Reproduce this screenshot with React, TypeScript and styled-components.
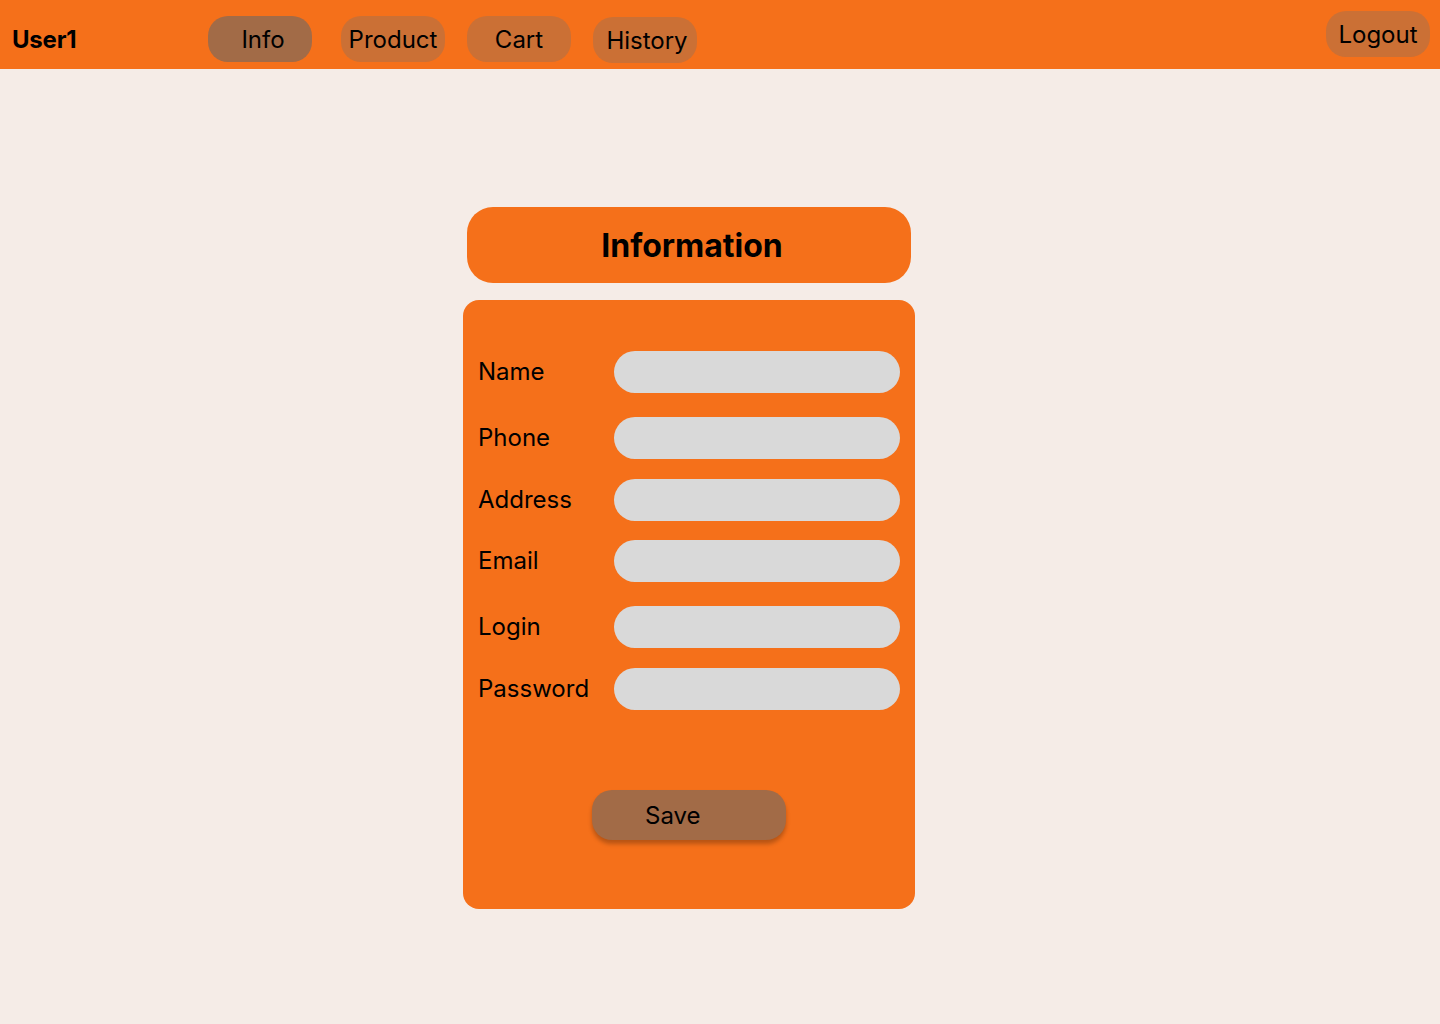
import React from "react";
import styled, { createGlobalStyle } from "styled-components";

const Global = createGlobalStyle`
  html, body { margin: 0; padding: 0; }
  body {
    background: #F5ECE7;
    font-family: Inter, "Noto Sans", "Liberation Sans", sans-serif;
    color: #000;
  }
`;

const Page = styled.div`
  min-height: 1024px;
  background: #F5ECE7;
`;

const Header = styled.header`
  height: 69px;
  background: #F5701A;
  display: flex;
  align-items: flex-start;
  box-sizing: border-box;
  padding: 0 10px 0 12px;
`;

const Brand = styled.div`
  width: 196px;
  height: 69px;
  line-height: 79px;
  font-weight: 700;
  font-size: 24px;
  letter-spacing: -0.2px;
`;

const Nav = styled.nav`
  display: flex;
  align-items: flex-start;
  gap: 22px;
  flex: 1;
`;

const Pill = styled.button<{ $active?: boolean; $top?: number; $after?: number; $shift?: number }>`
  width: 104px;
  height: 46px;
  margin-top: ${(p) => p.$top ?? 16}px;
  margin-right: ${(p) => p.$after ?? 0}px;
  border: none;
  border-radius: 20px;
  background: ${(p) => (p.$active ? "#A26B47" : "#CB7035")};
  font-family: Inter, "Noto Sans", sans-serif;
  font-size: 24px;
  color: #000;
  padding: 0 0 0 ${(p) => p.$shift ?? 0}px;
  display: flex;
  align-items: center;
  justify-content: center;
  cursor: pointer;
`;

const Main = styled.main`
  padding: 138px 0 0 463px;
  display: flex;
  flex-direction: column;
  align-items: flex-start;
`;

const TitleBox = styled.div`
  width: 444px;
  height: 76px;
  margin-left: 4px;
  border-radius: 26px;
  background: #F5701A;
  display: flex;
  align-items: center;
  justify-content: center;
  font-weight: 700;
  font-size: 32px;
  padding-left: 6px;
  box-sizing: border-box;
`;

const Card = styled.form`
  margin-top: 17px;
  width: 452px;
  height: 609px;
  box-sizing: border-box;
  border-radius: 16px;
  background: #F5701A;
  padding: 51px 15px 0 15px;
  display: flex;
  flex-direction: column;
`;

const Row = styled.div<{ $gap: number }>`
  display: grid;
  grid-template-columns: 136px 286px;
  align-items: center;
  margin-top: ${(p) => p.$gap}px;
`;

const Label = styled.label`
  font-size: 24px;
  line-height: 42px;
`;

const Input = styled.input`
  height: 42px;
  width: 286px;
  border: none;
  border-radius: 21px;
  background: #D9D9D9;
  outline: none;
  padding: 0 16px;
  box-sizing: border-box;
  font-family: Inter, sans-serif;
  font-size: 18px;
`;

const SaveButton = styled.button`
  margin: 80px 0 0 114px;
  width: 194px;
  height: 50px;
  border: none;
  border-radius: 20px;
  background: #A26B47;
  box-shadow: 0 4px 4px rgba(0, 0, 0, 0.25);
  font-family: Inter, sans-serif;
  font-size: 24px;
  color: #000;
  display: flex;
  align-items: center;
  justify-content: flex-start;
  padding: 0 0 0 53px;
  box-sizing: border-box;
  cursor: pointer;
`;

const fields: { label: string; gap: number; type?: string }[] = [
  { label: "Name", gap: 0 },
  { label: "Phone", gap: 24 },
  { label: "Address", gap: 20 },
  { label: "Email", gap: 19 },
  { label: "Login", gap: 24 },
  { label: "Password", gap: 20, type: "password" },
];

export default function App() {
  return (
    <Page>
      <Global />
      <Header>
        <Brand>User1</Brand>
        <Nav>
          <Pill $active $after={7} $shift={6}>Info</Pill>
          <Pill>Product</Pill>
          <Pill>Cart</Pill>
          <Pill $top={17} $shift={4}>History</Pill>
        </Nav>
        <Pill $top={11}>Logout</Pill>
      </Header>
      <Main>
        <TitleBox>Information</TitleBox>
        <Card onSubmit={(e) => e.preventDefault()}>
          {fields.map((f) => (
            <Row key={f.label} $gap={f.gap}>
              <Label>{f.label}</Label>
              <Input type={f.type ?? "text"} />
            </Row>
          ))}
          <SaveButton type="submit">Save</SaveButton>
        </Card>
      </Main>
    </Page>
  );
}
